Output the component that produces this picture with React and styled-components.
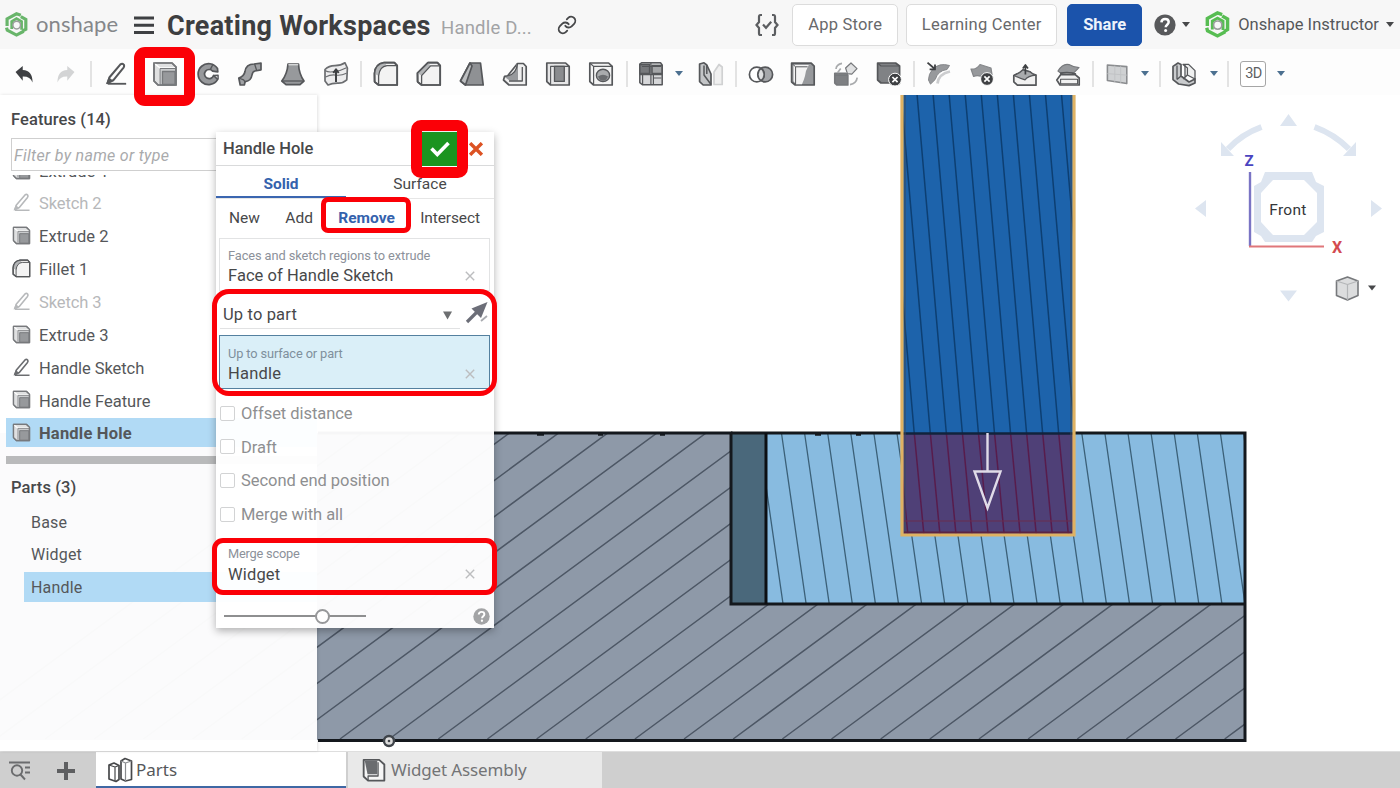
import React from "react";
import styled, { createGlobalStyle } from "styled-components";

const GlobalStyle = createGlobalStyle`
  *, *::before, *::after { box-sizing: border-box; }
  body { margin: 0; background: #fff; overflow: hidden; }
`;

const red = "#fb0007";
const ink = "#47484a";

const Page = styled.div`
  position: relative;
  display: flex;
  flex-direction: column;
  width: 1400px;
  height: 788px;
  overflow: hidden;
  background: #fff;
  color: ${ink};
  font-family: Roboto, "Liberation Sans", sans-serif;
  font-size: 16px;
`;

const Label = styled.span`
  display: block;
  white-space: nowrap;
  line-height: 1.2;
  font-size: ${(p) => p.$size || 16}px;
  font-weight: ${(p) => p.$weight || 400};
  letter-spacing: ${(p) => p.$track || 0}px;
  color: ${(p) => p.$color || "inherit"};
  font-style: ${(p) => (p.$italic ? "italic" : "normal")};
`;

/* ---------- top bar ---------- */

const TopBar = styled.header`
  display: flex;
  align-items: center;
  height: 49px;
  padding: 0 6px 0 4px;
  background: #f7f7f7;
`;

const Brand = styled.div`
  display: flex;
  align-items: center;
  gap: 7px;
  width: 130px;
  font-family: Lato, sans-serif;
`;

const DocTitle = styled.h1`
  margin: 3px 0 0 13px;
  width: 274px;
  font-size: 27px;
  line-height: 32px;
  font-weight: 700;
  letter-spacing: 0.26px;
  color: #3d3e40;
  white-space: nowrap;
`;

const DocTab = styled.div`
  width: 116px;
  padding-top: 8px;
`;

const Spacer = styled.div`
  flex: 1;
`;

const BarButton = styled.button`
  height: 42px;
  width: ${(p) => p.$w}px;
  margin-right: ${(p) => p.$gap}px;
  padding: 0;
  display: flex;
  align-items: center;
  justify-content: center;
  border-radius: 5px;
  border: 1.5px solid ${(p) => (p.$primary ? "#1b53ab" : "#dcdcdc")};
  background: ${(p) => (p.$primary ? "#1b53ab" : "#fff")};
  color: ${(p) => (p.$primary ? "#eef3fb" : "#68696b")};
  font-family: inherit;
`;

const Caret = styled.i`
  width: 0;
  height: 0;
  border-left: 4px solid transparent;
  border-right: 4px solid transparent;
  border-top: 5px solid ${(p) => p.$color || "#47484a"};
`;

const HelpGroup = styled.div`
  display: flex;
  align-items: center;
  gap: 6px;
  width: 50px;
`;

const UserGroup = styled.div`
  display: flex;
  align-items: center;
  gap: 7px;
`;

const BrandMark = ({ size = 25, colour = "#68b56a" }) => (
  <svg width={size} height={size} viewBox="0 0 26 26" fill="none" stroke={colour} strokeWidth="3.3">
    <path d="M17.500 3.400 13 1.900 3.200 7.200V14.500" />
    <path d="M2.600 16.200 3.400 19 13 24l7.500-4" />
    <path d="M17.500 4.800l5.200 2.900v10.200l-3.300 1.800" />
    <path d="M8 17.800V9.800L13 6.800l5.300 3v8.600" strokeWidth="2.800" />
    <circle cx="13.200" cy="13.600" r="4" fill="#f7f7f7" stroke="#9a9d9b" strokeWidth="1.600" />
  </svg>
);

const HelpMark = ({ size, fill }) => (
  <svg width={size} height={size} viewBox="0 0 22 22">
    <circle cx="11" cy="11" r="10.600" fill={fill} />
    <path d="M7.400 8.400c.2-2.300 1.700-3.400 3.700-3.400 2.100 0 3.600 1.200 3.600 3.100 0 2.600-3 2.700-3 5.200" fill="none" stroke="#fff" strokeWidth="2.500" />
    <circle cx="11.600" cy="16.500" r="1.500" fill="#fff" />
  </svg>
);

/* ---------- toolbar ---------- */

const Toolbar = styled.nav`
  display: flex;
  align-items: center;
  height: 46px;
  padding: 3px 0 0 3px;
  background: #fdfdfd;
`;

const Tool = styled.div`
  display: flex;
  align-items: center;
  justify-content: center;
  flex: none;
  width: ${(p) => p.$w || 43}px;
  height: 43px;
`;

const ToolGap = styled.div`
  flex: none;
  width: ${(p) => p.$w}px;
`;

const Divider = styled.div`
  flex: none;
  width: 2px;
  height: 26px;
  margin: 0 3px;
  background: #e3e3e3;
`;

const ThreeD = styled.div`
  width: 26px;
  height: 26px;
  display: flex;
  align-items: center;
  justify-content: center;
  border: 1.5px solid #a6a6a6;
  border-radius: 3px;
  background: #fff;
`;

const Ico = ({ children, size = 26, ...rest }) => (
  <svg width={size} height={size} viewBox="0 0 26 26" fill="none" stroke="#55575a" strokeWidth="1.7" strokeLinejoin="round" {...rest}>
    {children}
  </svg>
);

const PencilIcon = ({ size = 24, colour = "#55575a" }) => (
  <Ico size={size} stroke={colour} strokeWidth="2.2">
    <path d="M6 16.500 17.800 2.600q2-1.500 3.600.2.9 1.700-.2 3.200L10 19.800l-6 3z" />
    <path d="M2 24 5 16.600l5 3.600z" fill={colour} stroke="none" />
    <path d="M4 23.600h20" strokeWidth="2" />
  </Ico>
);

const ExtrudeIcon = ({ size = 26 }) => (
  <Ico size={size} stroke="#77797c">
    <path d="M2 2h18l4 4v18H6l-4-4z" fill="#dfe0e1" />
    <path d="M2 2l6 5v17M8 7h15" stroke="#fff" strokeWidth="1.500" />
    <path d="M8 7.500h15.500V24H8z" fill="#c9cbcd" strokeWidth="1" />
    <path d="M10.500 10.500h12.500v13H10.500z" fill="#97999c" strokeWidth="1.300" />
    <path d="M2 2h18l4 4v18H6l-4-4z" />
  </Ico>
);

const FilletIcon = ({ size = 26 }) => (
  <Ico size={size}>
    <path d="M1.500 12.500Q2 3 11 1.600h10.400l2.800 3V24H5.600l-4-3.200z" fill="#f3f3f3" />
    <path d="M1.500 12.500Q2 3 11 1.600l3 3.200Q6 6 5.600 15z" fill="#b3b5b7" stroke="none" />
    <path d="M5.600 24V15Q6.500 5.600 14 4.700h10" strokeWidth="1.300" />
    <path d="M1.500 12.500Q2 3 11 1.600h10.400l2.800 3V24H5.600l-4-3.200z" />
  </Ico>
);

const TOOLS = {
  undo: (
    <Ico size={22} stroke="none" fill="#3e4043">
      <path d="M3 10.500 11.500 3.600v4.600q12 .6 11.500 14.800-2.600-7.200-11.500-6.900v4.900z" />
    </Ico>
  ),
  redo: (
    <Ico size={22} stroke="none" fill="#d3d4d5">
      <path d="M23 10.500 14.500 3.600v4.600Q2.500 8.800 3 23q2.600-7.200 11.500-6.900v4.900z" />
    </Ico>
  ),
  revolve: (
    <Ico>
      <path d="M22.500 7.500A10.500 10.500 0 1 0 22.700 18.400L18.500 14.500A4.600 4.600 0 1 1 17.700 10.200L22.800 10.800z" fill="#97999c" />
      <path d="M18 3.200l-2.600 5.200M18.500 14.500l4.600-.2v4" strokeWidth="1.400" />
    </Ico>
  ),
  sweep: (
    <Ico>
      <path d="M1.800 17Q7 15.500 8 10.500 9 3 17 3l7-.8v6.600l-6 1.200q-2.500.6-3 4-1 6-6.600 6.600-.8 1-1 3.400H3.200z" fill="#a0a2a5" />
      <path d="M1.800 17 6.600 18.800 8.200 21M17.600 3l2 6.200" strokeWidth="1.300" />
    </Ico>
  ),
  loft: (
    <Ico>
      <path d="M8 3h10.500Q19 13 24 20l-4 3.600H6L1.800 20Q7.300 13 8 3z" fill="#97999c" />
      <path d="M1.800 20h22" strokeWidth="1.300" />
      <path d="M8.400 3.700h9.800" stroke="#d5d6d7" strokeWidth="1.400" />
    </Ico>
  ),
  thicken: (
    <Ico stroke="#6b6d70">
      <path d="M2 8.500Q6 4.500 12 4.600 18 4.500 22 1.800l2.400 5.200-.6 11.800q-4 3.500-8.800 3.300Q9 22 5 24L2 20z" fill="#ececed" />
      <path d="M2 9.500q4 2.500 10 .8 6-.5 11.500-3.500M2.500 16q6-3 11-1.800 5 .5 10-2" strokeWidth="1.100" />
      <path d="M13 21V9M10.300 12 13 8.400l2.700 3.600" strokeWidth="2" stroke="#3e4043" />
    </Ico>
  ),
  fillet: <FilletIcon />,
  chamfer: (
    <Ico>
      <path d="M1.500 12 12 1.600h9.400l2.800 3V24H5.600l-4-3.200z" fill="#f3f3f3" />
      <path d="M1.500 12 12 1.600l2.600 3.200-9 10z" fill="#b3b5b7" stroke="none" />
      <path d="M5.600 24v-9.400l9-9.700h9.200" strokeWidth="1.300" />
      <path d="M1.500 12 12 1.600h9.400l2.800 3V24H5.600l-4-3.200z" />
    </Ico>
  ),
  draft: (
    <Ico>
      <path d="M11 2h10.500l2.700 22H6.500l-5-4z" fill="#8f9194" />
      <path d="M11 2 1.500 20l5 4L13 5z" fill="#bcbec0" />
    </Ico>
  ),
  rib: (
    <Ico>
      <path d="M15.500 2.500h5.900l2.800 3V24H7l-5.500-5 1-3.500 3-.5z" fill="#efefef" />
      <path d="M16 4v15.500H7.500L2 15.500Q14 15 14.500 3z" fill="#97999c" stroke="none" />
      <path d="M2 15.500Q14.500 14.500 15.500 2.500M7 20h13.300V6" strokeWidth="1.300" />
    </Ico>
  ),
  shell: (
    <Ico>
      <path d="M1.800 2h18.800l3.600 3.400V24H5.600l-3.800-3.400z" fill="#e6e6e7" />
      <path d="M9.500 5.400h9.800v15H9.500z" fill="#8a8c8f" strokeWidth="1.300" />
      <path d="M5.600 24V5.400h18.600" strokeWidth="1.100" />
    </Ico>
  ),
  hole: (
    <Ico>
      <path d="M1.800 2h18.800l3.600 3.400V24H5.600l-3.800-3.400z" fill="#f3f3f3" />
      <path d="M1.800 2l3.800 3.400V24M5.600 5.400h18.600" strokeWidth="1.200" />
      <ellipse cx="15" cy="14.400" rx="6.600" ry="6.200" fill="#a9abad" strokeWidth="1.400" />
      <path d="M10 15.500q5-3.500 10 0-1.500 4.200-5 4.200t-5-4.200z" fill="#6a6c6f" stroke="none" />
    </Ico>
  ),
  pattern: (
    <Ico strokeWidth="1.500">
      <path d="M1.800 3 3.500 1.800h19L24.200 4v19.800H4.400L1.800 21.600z" fill="#d6d7d9" />
      <path d="M1.800 3.600h9.800v9H1.800z" fill="#77797c" />
      <path d="M14 4.600h10v8H14z" fill="#a4a6a8" />
      <path d="M1.800 13.600h22.400M12.900 2v21.800M4 5.500h19M4.600 14v9M15.400 14v9M15.400 17h8" strokeWidth="1.200" />
    </Ico>
  ),
  mirror: (
    <Ico>
      <path d="M1.600 3 6 1.800 8.800 4 13 13v11H5.200L1.600 20.600z" fill="#c3c5c7" />
      <path d="M6 4.500V14l7 9.500M8.800 4v9" strokeWidth="1.500" />
      <path d="M16 11V23.500h8.200V6L21 3.500 16 11z" stroke="#d0d1d2" fill="#f0f0f0" />
    </Ico>
  ),
  boolean: (
    <Ico strokeWidth="1.700">
      <circle cx="17.200" cy="13.500" r="7.400" fill="#a5a7aa" />
      <circle cx="8.800" cy="13.500" r="7.400" fill="#fff" />
      <path d="M13 7.400a7.400 7.400 0 0 1 0 12.200 7.400 7.400 0 0 1 0-12.200z" fill="#dedfe0" />
    </Ico>
  ),
  split: (
    <Ico>
      <path d="M1.600 2.200h19.600l3 3V24H5.200l-3.600-3z" fill="#97999c" />
      <path d="M3.500 4h15.300q-3.500 6-3.800 11-1.200 4.500-3 8.200H6L3.500 20z" fill="#f4f4f4" stroke="none" />
      <path d="M2 2.600 5.600 5.800V23M5.600 5.800h12" strokeWidth="1" />
    </Ico>
  ),
  transform: (
    <Ico stroke="#77797c">
      <path d="M1.800 12.400h11l2 1.800V24H4l-2.200-2z" fill="#7e8083" />
      <path d="M1.800 14.400H15" strokeWidth="1.100" />
      <path d="M12.600 7 18 2l6 5.600-5.200 5.600-4.400-.6z" fill="#e0e1e2" strokeWidth="1.200" />
      <path d="M3 8q.4-4.600 6-5.600M17 23.600q6.400-1.200 7.200-7M4.400 12l3.300-4.500" stroke="#a9abad" />
    </Ico>
  ),
  deletePart: (
    <Ico>
      <path d="M1.600 2h18l4 3v17H5l-3.400-3z" fill="#808285" />
      <path d="M2 2.200 5 5h18" strokeWidth="1.200" />
      <circle cx="19" cy="18.600" r="6.400" fill="#3e4043" stroke="#fff" strokeWidth="1" />
      <path d="M16.400 16l5.200 5.200M21.600 16l-5.200 5.200" stroke="#fff" strokeWidth="1.700" />
    </Ico>
  ),
  modifyFillet: (
    <Ico stroke="#85878a">
      <path d="M6.500 8.500Q13 1.500 23.500 4.500L21 8.500Q12 9.500 9.200 18.500l-4.700 4.600L2.500 19Q2.500 13 6.500 8.500z" fill="#97999c" strokeWidth="1" />
      <path d="M11.500 22.500q1-9.500 12.500-12" stroke="#cccdcf" strokeWidth="2.800" />
      <path d="M1.500 1.600 8 7.200M9 3.400v5H3.600" stroke="#3e4043" strokeWidth="1.800" />
    </Ico>
  ),
  deleteFace: (
    <Ico>
      <path d="M2 8q5 1 9-4.500L22 7l1 6.500-8 3Q9 13.500 4.600 15.500z" fill="#97999c" stroke="#85878a" strokeWidth="1.200" />
      <circle cx="18" cy="18" r="6.400" fill="#3e4043" stroke="#fff" strokeWidth="1" />
      <path d="M15.400 15.400l5.200 5.200M20.600 15.400l-5.200 5.200" stroke="#fff" strokeWidth="1.700" />
    </Ico>
  ),
  moveFace: (
    <Ico>
      <path d="M1.800 14.500Q8 12 11 8.800l7 2q3 3 6 3.400v10H5.400l-3.600-3.400z" fill="#f1f1f1" />
      <path d="M1.800 14.500Q8 12 11 8.800l7 2q3 3 6 3.400-8 .6-11 4.600-5-1.400-11-4.300z" fill="#a9abad" strokeWidth="1.200" />
      <path d="M13.400 13.500V5M10.800 7.400 13.400 4l2.600 3.400" stroke="#3e4043" strokeWidth="1.700" />
    </Ico>
  ),
  replaceFace: (
    <Ico>
      <path d="M3 10Q8 2 14 3.600q5 3 10 3l-5 5H5z" fill="#97999c" stroke="#77797c" strokeWidth="1.200" />
      <path d="M1.800 19l4-5.400h14.400l4 3.400v7H5z" fill="#f1f1f1" />
      <path d="M5.600 18.200h17v4.600h-17z" strokeWidth="1.100" />
      <path d="M5 12.400q8-2 16 .6" strokeWidth="1.800" />
    </Ico>
  ),
  plane: (
    <Ico size={24}>
      <path d="M2.600 3.200 23.600 5v18.400L2.600 20z" fill="#cfd1d3" stroke="#8a8c8f" />
      <path d="M10.600 4v17.500M17 4.600v18M2.600 12.600l21 1.600" stroke="#c0c2c4" strokeWidth="1" />
    </Ico>
  ),
  frame: (
    <Ico>
      <path d="M2 5.400 7 2l3 1.400V15l8 6 6-3v4l-6 2.600L7.600 23 2 18.600z" fill="#c9cbcd" />
      <path d="M12 3.400h5.600L24 9.600V18l-7.600-4V7z" fill="#eff0f0" strokeWidth="1.300" />
      <path d="M6 4.600v14M10 15l-4 3.600M16.400 14l-4.200 4M14 3.400v13" strokeWidth="1.300" />
    </Ico>
  ),
};

/* ---------- work area ---------- */

const Workspace = styled.main`
  position: relative;
  display: grid;
  flex: none;
  height: 656px;
  & > * { grid-area: 1 / 1; }
`;

const Canvas = styled.svg`
  display: block;
  width: 1400px;
  height: 656px;
`;

const hatch = (count, fn) => Array.from({ length: count }, (_, i) => fn(i)).join("");

const Model = () => (
  <Canvas viewBox="0 95 1400 656">
    <defs>
      <clipPath id="base"><path d="M0 433h731v171h514v136H0z" /></clipPath>
      <clipPath id="widget"><path d="M766 433h479v170H766z" /></clipPath>
      <clipPath id="handle"><path d="M903 95h170v440H903z" /></clipPath>
    </defs>
    <path d="M0 433h731v171h514v136H0z" fill="#8e99a8" />
    <path
      clipPath="url(#base)"
      stroke="#4d5765" strokeWidth="1.5" fill="none"
      d={hatch(28, (i) => `M${340 + 49.15 * (i - 8)} 739l441 -325`)}
    />
    <rect x="732" y="433" width="33" height="171" fill="#4a687b" />
    <path d="M766 433h479v170H766z" fill="#88bbe0" />
    <path
      clipPath="url(#widget)"
      stroke="#3b6078" strokeWidth="1.3" fill="none"
      d={hatch(23, (i) => `M${781.6 + 23.1 * (i - 1)} 434l24.4 169`)}
    />
    <path d="M318 433h413v171h514" fill="none" stroke="#14181d" strokeWidth="3" />
    <path d="M731 433h514v307.5H318" fill="none" stroke="#14181d" strokeWidth="3" />
    <path d="M766 433v171" stroke="#0c0f13" strokeWidth="3" />
    <path d="M537 434.500h7M598 434.500h5M660 434.500h5M815 434.500h6M856 434.500h5" stroke="#14181d" strokeWidth="2.500" />
    <rect x="903" y="95" width="170" height="339" fill="#1d63ab" />
    <rect x="903" y="434" width="170" height="100" fill="#4f4077" />
    <g clipPath="url(#handle)" fill="none" strokeWidth="1.5">
      <path stroke="#0d3f72" d={hatch(14, (i) => `M${885 + 16.05 * (i - 1)} 95l29.3 339`)} />
      <path stroke="#581c4c" d={hatch(13, (i) => `M${898.3 + 16.05 * i} 434l9.500 100`)} />
    </g>
    <path d="M903 433.5h170" stroke="#12233c" strokeWidth="2.5" />
    <path d="M905 95v438M1071 95v438" stroke="#3b4a5c" strokeWidth="1" />
    <path d="M903 521h170" stroke="#6b2c4f" strokeWidth="1" />
    <path d="M904 532.5h168" stroke="#5c2443" strokeWidth="2" />
    <path d="M902 95v440h172V95" fill="none" stroke="#dfb263" strokeWidth="3.2" />
    <path d="M987.5 433v38M974.5 471.5h26L987.5 508z" fill="none" stroke="#e0dbe8" strokeWidth="2.4" />
    <circle cx="389" cy="741" r="5" fill="#ddd" stroke="#3f444a" strokeWidth="2.4" />
    <circle cx="389" cy="741" r="1.3" fill="#3f444a" />

    <g fill="#dde5f0">
      <path d="M1280 126h17l-8.500 -12z M1206 200v17l-11 -8.500z M1371 200v17l11 -8.500z M1280 290.500h17l-8.500 11z" />
      <path d="M1221 142v14h13z M1356 142v14h-13z" />
      <path d="M1265 172h47l4 10 8 4v46l-8 4-4 6h-47l-4-6-7-4v-46l7-4z" />
    </g>
    <path d="M1261.500 127Q1242 134 1228 149M1314.500 127Q1334 134 1349 149" fill="none" stroke="#dde5f0" strokeWidth="6" />
    <path d="M1273 180h31l13 13v29l-13 13h-31l-12-13v-29z" fill="#fff" />
    <path d="M1250 172v74" stroke="#7a74c4" strokeWidth="2.4" />
    <path d="M1249 246.500h75" stroke="#e0777a" strokeWidth="2.2" />
    <g fontFamily="Roboto, sans-serif" textAnchor="middle">
      <text x="1288" y="214.500" fontSize="15.500" letterSpacing="0.300" fill="#35373a">Front</text>
      <text x="1249" y="165.500" fontSize="15" fontWeight="700" fill="#4a45c0">Z</text>
      <text x="1337" y="253" fontSize="16" fontWeight="700" fill="#d34b50">X</text>
    </g>
    <g stroke="#77797c" strokeWidth="1.600" strokeLinejoin="round">
      <path d="M1336.500 281l11-4 10.500 4v14.500l-10.500 4.500-11-4.500z" fill="#dcddde" />
      <path d="M1336.500 281l11 3.500 10.500-3.500M1347.500 284.500V300" fill="none" stroke="#b4b6b8" strokeWidth="1.200" />
    </g>
    <path d="M1368 285.500h8l-4 5z" fill="#47484a" />
  </Canvas>
);

const FeaturePanel = styled.aside`
  display: flex;
  flex-direction: column;
  width: 317px;
  height: 656px;
  padding: 14px 0 0 6px;
  background: rgba(255, 255, 255, 0.965);
  box-shadow: 1px 0 3px rgba(0, 0, 0, 0.12);
`;

const PanelHeading = styled.h2`
  margin: 0 0 ${(p) => p.$gap || 0}px 5px;
  flex: none;
  height: 22px;
  font-size: 16.5px;
  line-height: 22px;
  font-weight: 500;
  letter-spacing: 0.1px;
`;

const FilterBox = styled.div`
  display: flex;
  align-items: center;
  margin: 6.500px 6px 4px 5px;
  flex: none;
  height: 33px;
  padding: 3px 2px 0;
  border: 1.5px solid #cfcfcf;
  background: #fff;
`;

const FeatureList = styled.ul`
  margin: 0;
  padding: 0;
  list-style: none;
  flex: none;
  height: 276px;
  overflow: hidden;
`;

const FeatureRow = styled.li`
  display: flex;
  align-items: center;
  gap: 8px;
  height: 29px;
  margin-bottom: 3.850px;
  padding: 1px 0 0 6px;
  background: ${(p) => (p.$selected ? "#b1daf5" : "transparent")};
  &:first-child { margin-top: -19px; }
  & > svg { margin-top: -1px; }
  & > span { padding-top: 2px; }
`;

const RollbackBar = styled.div`
  flex: none;
  height: 8px;
  margin: 5px 0 13px;
  background: #b9babb;
`;

const PartRow = styled.div`
  display: flex;
  align-items: center;
  flex: none;
  height: 30px;
  margin: 0 0 2.500px 18px;
  padding: 2px 0 0 7px;
  background: ${(p) => (p.$selected ? "#b1daf5" : "transparent")};
`;

const FEATURES = [
  ["extrude", "Extrude 1", 0.1],
  ["sketch", "Sketch 2", -0.1],
  ["extrude", "Extrude 2", 0.05],
  ["fillet", "Fillet 1", 0.1],
  ["sketch", "Sketch 3", -0.1],
  ["extrude", "Extrude 3", 0.05],
  ["sketchOn", "Handle Sketch", -0.05],
  ["extrude", "Handle Feature", 0],
  ["extrude", "Handle Hole", 0.2],
];

const FeatureGlyph = ({ kind }) => {
  if (kind === "extrude") return <ExtrudeIcon size={19} />;
  if (kind === "fillet") return <FilletIcon size={19} />;
  return <PencilIcon size={19} colour={kind === "sketch" ? "#b7b9bb" : "#6b6d70"} />;
};

/* ---------- extrude dialog ---------- */

const Dialog = styled.section`
  position: absolute;
  left: 216px;
  top: 37px;
  width: 278px;
  height: 496px;
  display: flex;
  flex-direction: column;
  background: rgba(255, 255, 255, 0.965);
  box-shadow: 0 3px 8px rgba(0, 0, 0, 0.3);
`;

const DialogHeader = styled.div`
  display: flex;
  align-items: center;
  height: 34px;
  padding: 0 11px 0 7px;
  border-bottom: 1.5px solid #d9dadb;
  background: #fff;
`;

const Confirm = styled.div`
  display: flex;
  align-items: center;
  justify-content: center;
  width: 35px;
  height: 34px;
  margin: 0 12px 0 auto;
  background: #1b941f;
`;

const KindTabs = styled.div`
  display: grid;
  grid-template-columns: 130px 1fr;
  height: 33px;
  background: #fff;
  border-bottom: 1px solid #e6e6e6;
`;

const KindTab = styled.div`
  display: flex;
  align-items: center;
  justify-content: center;
  padding-top: 7px;
  border-bottom: 2.5px solid ${(p) => (p.$active ? "#3b66b0" : "transparent")};
`;

const OpRow = styled.div`
  display: flex;
  align-items: center;
  justify-content: space-between;
  height: 32px;
  padding: 7px 14px 0 13px;
  background: #fff;
`;

const Field = styled.div`
  display: flex;
  flex-direction: column;
  flex: none;
  width: 271px;
  height: ${(p) => p.$h}px;
  margin: ${(p) => p.$top || 0}px 0 0 3px;
  padding: ${(p) => p.$pad || 8}px 14px 0 8px;
  border: 1.5px solid ${(p) => (p.$bare ? "transparent" : p.$active ? "#54809f" : "#e2e3e4")};
  background: ${(p) => (p.$active ? "#daeff8" : "transparent")};
`;

const FieldValue = styled.div`
  display: flex;
  align-items: center;
  justify-content: space-between;
  margin-top: 2px;
  height: 22px;
`;

const EndType = styled.div`
  display: flex;
  align-items: center;
  height: 31px;
  margin: 7px 34px 0 4px;
  padding: 4px 8px 0 3px;
  border-bottom: 1.5px solid #e1e2e3;
  justify-content: space-between;
`;

const FlipButton = styled.div`
  position: absolute;
  left: 249px;
  top: 169px;
`;

const Options = styled.div`
  display: flex;
  flex-direction: column;
  gap: 3.700px;
  margin: 9px 0 0 4px;
`;

const Option = styled.label`
  display: flex;
  align-items: center;
  gap: 6px;
  height: 30px;
  & > span:last-child { padding-top: 2px; }
`;

const Box = styled.span`
  width: 15px;
  height: 15px;
  border: 1.5px solid #d2d3d4;
  border-radius: 2px;
  background: #fff;
`;

const DialogFooter = styled.div`
  display: flex;
  align-items: center;
  justify-content: space-between;
  margin-top: auto;
  height: 24px;
  padding: 0 4px 0 8px;
`;

const Slider = styled.div`
  display: flex;
  align-items: center;
  justify-content: center;
  width: 142px;
  height: 2.5px;
  padding-left: 54px;
  background: #8e8f90;
`;

const Thumb = styled.span`
  flex: none;
  width: 15px;
  height: 15px;
  border: 2px solid #97989a;
  border-radius: 50%;
  background: #fff;
`;

const Cross = ({ size = 10, colour = "#bcbdbf", weight = 1.4 }) => (
  <svg width={size} height={size} viewBox="0 0 10 10" stroke={colour} strokeWidth={weight} fill="none">
    <path d="M.8.8l8.400 8.400M9.200.8.800 9.200" />
  </svg>
);

/* red outline marking a control in the tutorial */
const Callout = styled.div`
  position: absolute;
  left: ${(p) => p.$x}px;
  top: ${(p) => p.$y}px;
  width: ${(p) => p.$w}px;
  height: ${(p) => p.$h}px;
  border: ${(p) => p.$line}px solid ${red};
  border-radius: ${(p) => p.$r}px;
`;

/* ---------- bottom tabs ---------- */

const TabBar = styled.footer`
  display: flex;
  flex: none;
  height: 37px;
  border-top: 1px solid #dedede;
  background: #cfcfcf;
`;

const BarTools = styled.div`
  display: flex;
  align-items: center;
  width: 96px;
  padding: 2px 0 0 8px;
  gap: 24px;
`;

const Tab = styled.div`
  display: flex;
  align-items: center;
  gap: ${(p) => p.$gap}px;
  width: ${(p) => p.$w}px;
  margin-right: 2px;
  padding: 1px 0 0 ${(p) => p.$pad}px;
  border-bottom: 2.5px solid ${(p) => (p.$active ? "#3f68a4" : "#e9e9e9")};
  background: ${(p) => (p.$active ? "#fff" : "#e9e9e9")};
  font-family: "Noto Sans", "Open Sans", sans-serif;
  & > span { padding-top: 1px; }
`;

export default function App() {
  return (
    <Page>
      <GlobalStyle />
      <TopBar>
        <Brand>
          <BrandMark />
          <Label $size={22} $track={0.1} $color="#85878a">onshape</Label>
        </Brand>
        <svg width="20" height="20" viewBox="0 0 20 20" stroke="#3e4043" strokeWidth="3"><path d="M0 3h20M0 10.200h20M0 17.400h20" /></svg>
        <DocTitle>Creating Workspaces</DocTitle>
        <DocTab><Label $size={18.5} $track={0.2} $color="#a2a3a5">Handle D...</Label></DocTab>
        <svg width="20" height="20" viewBox="0 0 24 24" fill="none" stroke="#47484a" strokeWidth="2.200" strokeLinecap="round">
          <path d="M10 13a5 5 0 0 0 7.540.540l3-3a5 5 0 0 0-7.070-7.070l-1.720 1.710" />
          <path d="M14 11a5 5 0 0 0-7.540-.540l-3 3a5 5 0 0 0 7.070 7.070l1.710-1.710" />
        </svg>
        <Spacer />
        <svg width="24" height="24" viewBox="0 0 24 24" fill="none" stroke="#5c5e61" strokeWidth="2.200">
          <path d="M7 2H5.500Q4 2 4 3.800V9L1.500 12 4 15v5.200Q4 22 5.500 22H7M17 2h1.500Q20 2 20 3.800V9l2.500 3L20 15v5.200q0 1.800-1.500 1.800H17M8 11.500l3 3.300 5.200-6" />
        </svg>
        <ToolGap $w={13} />
        <BarButton $w={106} $gap={8}><Label $size={16.5} $track={0.2}>App Store</Label></BarButton>
        <BarButton $w={151} $gap={10}><Label $size={16.5} $track={0.25}>Learning Center</Label></BarButton>
        <BarButton $w={75} $gap={12} $primary><Label $size={16.5} $weight={700}>Share</Label></BarButton>
        <HelpGroup><HelpMark size={22} fill="#58595b" /><Caret /></HelpGroup>
        <UserGroup>
          <BrandMark size={27} colour="#57bd52" />
          <Label $size={16.5} $track={0.03} $color="#55575a">Onshape Instructor</Label>
          <Caret />
        </UserGroup>
      </TopBar>

      <Toolbar>
        <Tool $w={42}>{TOOLS.undo}</Tool>
        <Tool $w={42}>{TOOLS.redo}</Tool>
        <Divider />
        <Tool $w={42}><PencilIcon /></Tool>
        <ToolGap $w={6.5} />
        <Tool $w={42.7}><ExtrudeIcon /></Tool>
        {["revolve", "sweep", "loft", "thicken"].map((k) => <Tool key={k} $w={42.7}>{TOOLS[k]}</Tool>)}
        <Divider />
        {["fillet", "chamfer", "draft", "rib", "shell", "hole"].map((k) => <Tool key={k}>{TOOLS[k]}</Tool>)}
        <Divider />
        <Tool $w={41}>{TOOLS.pattern}</Tool>
        <Tool $w={14}><Caret $color="#4c7090" /></Tool>
        <ToolGap $w={4} />
        <Tool $w={42.5}>{TOOLS.mirror}</Tool>
        <Divider />
        <Tool $w={41}>{TOOLS.boolean}</Tool>
        {["split", "transform", "deletePart"].map((k) => <Tool key={k}>{TOOLS[k]}</Tool>)}
        <Divider />
        <Tool $w={42}>{TOOLS.modifyFillet}</Tool>
        {["deleteFace", "moveFace", "replaceFace"].map((k) => <Tool key={k}>{TOOLS[k]}</Tool>)}
        <Divider />
        <Tool $w={40}>{TOOLS.plane}</Tool>
        <Tool $w={16}><Caret $color="#4c7090" /></Tool>
        <ToolGap $w={3} />
        <Divider />
        <Tool $w={40}>{TOOLS.frame}</Tool>
        <Tool $w={20}><Caret $color="#4c7090" /></Tool>
        <Divider />
        <Tool $w={42}><ThreeD><Label $size={14.5} $track={-0.6} $color="#5d5f62">3D</Label></ThreeD></Tool>
        <Tool $w={14}><Caret $color="#4c7090" /></Tool>
      </Toolbar>

      <Workspace>
        <Model />
        <FeaturePanel>
          <PanelHeading>Features (14)</PanelHeading>
          <FilterBox><Label $size={16} $track={0.3} $color="#a9aaac" $italic>Filter by name or type</Label></FilterBox>
          <FeatureList>
            {FEATURES.map(([kind, name, track]) => (
              <FeatureRow key={name} $selected={name === "Handle Hole"}>
                <FeatureGlyph kind={kind} />
                <Label $size={16.5} $track={track} $weight={name === "Handle Hole" ? 700 : 400} $color={kind === "sketch" ? "#b7b8ba" : "#55575a"}>{name}</Label>
              </FeatureRow>
            ))}
          </FeatureList>
          <RollbackBar />
          <PanelHeading $gap={8}>Parts (3)</PanelHeading>
          {["Base", "Widget", "Handle"].map((name) => (
            <PartRow key={name} $selected={name === "Handle"}><Label $size={16} $track={0.2} $color="#55575a">{name}</Label></PartRow>
          ))}
        </FeaturePanel>

        <Dialog>
          <DialogHeader>
            <Label $size={16.5} $weight={500}>Handle Hole</Label>
            <Confirm>
              <svg width="22" height="18" viewBox="0 0 22 18" fill="none" stroke="#fff" strokeWidth="3.600"><path d="M2.500 8.500l5.800 6L19.500 3" /></svg>
            </Confirm>
            <Cross size={14} colour="#dc5223" weight={2.4} />
          </DialogHeader>
          <KindTabs>
            <KindTab $active><Label $size={15.5} $weight={700} $color="#3462ad">Solid</Label></KindTab>
            <KindTab><Label $size={15.5}>Surface</Label></KindTab>
          </KindTabs>
          <OpRow>
            <Label $size={15.5}>New</Label>
            <Label $size={15.5}>Add</Label>
            <Label $size={15.5} $weight={700} $color="#3462ad">Remove</Label>
            <Label $size={15.5} $track={-0.1}>Intersect</Label>
          </OpRow>
          <Field $h={53} $top={7} $pad={9}>
            <Label $size={12.8} $track={-0.08} $color="#8c919a">Faces and sketch regions to extrude</Label>
            <FieldValue><Label $size={16.5} $track={0.05}>Face of Handle Sketch</Label><Cross /></FieldValue>
          </Field>
          <EndType>
            <Label $size={16.5} $track={0.15}>Up to part</Label>
            <svg width="9" height="9" viewBox="0 0 9 9"><path d="M0 .5h9L4.500 8.500z" fill="#6d6f71" /></svg>
          </EndType>
          <FlipButton>
            <svg width="24" height="24" viewBox="0 0 24 24">
              <path d="M2 21 13 10" stroke="#6c6e78" strokeWidth="3.200" fill="none" />
              <path d="M22.500 1 6.500 7.500 16 17z" fill="#6c6e78" />
              <path d="M16 20l6-5" stroke="#a9abb0" strokeWidth="1.800" />
            </svg>
          </FlipButton>
          <Field $h={54} $top={6} $pad={10} $active>
            <Label $size={12.8} $track={-0.12} $color="#7f909d">Up to surface or part</Label>
            <FieldValue><Label $size={16.5} $track={0.2}>Handle</Label><Cross /></FieldValue>
          </Field>
          <Options>
            {["Offset distance", "Draft", "Second end position", "Merge with all"].map((name) => (
              <Option key={name}><Box /><Label $size={16.5} $track={-0.05} $color="#8e8f91">{name}</Label></Option>
            ))}
          </Options>
          <Field $h={50} $top={8} $pad={8} $bare>
            <Label $size={12.8} $track={-0.2} $color="#8c919a">Merge scope</Label>
            <FieldValue><Label $size={16.5} $track={0.15}>Widget</Label><Cross /></FieldValue>
          </Field>
          <DialogFooter>
            <Slider><Thumb /></Slider>
            <HelpMark size={17} fill="#a3a4a6" />
          </DialogFooter>
        </Dialog>
      </Workspace>

      <TabBar>
        <BarTools>
          <svg width="24" height="22" viewBox="0 0 24 22" fill="none" stroke="#6b6c6e" strokeWidth="1.900">
            <path d="M1 2.500h21M17 7.500h5M17 12.500h5" />
            <circle cx="9" cy="10.500" r="5.200" />
            <path d="M12.500 14.500l4.500 5" />
          </svg>
          <svg width="20" height="20" viewBox="0 0 20 20" stroke="#5e5f61" strokeWidth="4"><path d="M1 10h18M10 1v18" /></svg>
        </BarTools>
        <Tab $active $w={250} $pad={12} $gap={3}>
          <svg width="25" height="26" viewBox="0 0 25 26" fill="#fff" stroke="#47484a" strokeWidth="1.700" strokeLinejoin="round">
            <path d="M1 8 6 6l5 2.500v14L8 24.500 1 22z" />
            <path d="M1 8l6 2v14M7 10l4-1.500" fill="none" strokeWidth="1.200" />
            <path d="M13 4 17 1.500l6.500 2.500v18.500l-6 1.500-4.500-2z" />
            <path d="M13 4l4.500 2v18M17.500 6l6-2" fill="none" strokeWidth="1.200" stroke="#8a8c8f" />
          </svg>
          <Label $size={17} $color="#55575a">Parts</Label>
        </Tab>
        <Tab $w={254} $pad={14} $gap={5}>
          <Ico size={24}>
            <path d="M1.800 2h16.800l5.600 5V24.500H6.600l-4.800-4.500z" fill="#f6f6f6" strokeWidth="2" />
            <path d="M3 3h13.500v14.500H6z" fill="#6a6c6f" stroke="none" />
            <path d="M6.600 24V19.500h10.800V4.500" strokeWidth="1.400" />
          </Ico>
          <Label $size={17} $track={-0.13} $color="#737476">Widget Assembly</Label>
        </Tab>
      </TabBar>

      <Callout $x={134} $y={47} $w={61} $h={59} $line={11} $r={11} />
      <Callout $x={411} $y={120} $w={57} $h={58} $line={11.5} $r={10} />
      <Callout $x={321} $y={197} $w={90} $h={36} $line={5} $r={7} />
      <Callout $x={212} $y={289} $w={285} $h={107} $line={5.5} $r={17} />
      <Callout $x={212} $y={538} $w={285} $h={57} $line={5.5} $r={11} />
    </Page>
  );
}
